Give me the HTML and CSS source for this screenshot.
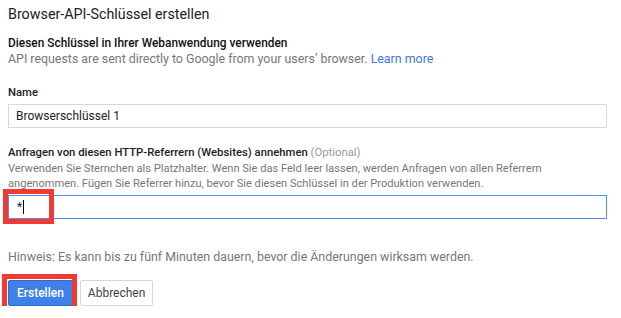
FILE: index.html
```html
<!DOCTYPE html>
<html lang="de">
<head>
<meta charset="utf-8">
<title>Browser-API-Schlüssel erstellen</title>
<link rel="stylesheet" href="styles.css">
</head>
<body>

<h1 class="page_title">Browser-API-Schlüssel erstellen</h1>

<div class="intro">
	<div class="intro_head">Diesen Schlüssel in Ihrer Webanwendung verwenden</div>
	<div class="intro_text">API requests are sent directly to Google from your users’ browser. <a class="link" href="#">Learn more</a></div>
</div>

<div class="field">
	<label class="field_label">Name</label>
	<div class="text_box">Browserschlüssel 1</div>
</div>

<div class="field referrer_field">
	<label class="field_label">Anfragen von diesen HTTP-Referrern (Websites) annehmen <span class="optional">(Optional)</span></label>
	<div class="field_help">Verwenden Sie Sternchen als Platzhalter. Wenn Sie das Feld leer lassen, werden Anfragen von allen Referrern angenommen. Fügen Sie Referrer hinzu, bevor Sie diesen Schlüssel in der Produktion verwenden.</div>
	<div class="box_wrap">
		<div class="text_box focused">*<span class="caret"></span></div>
		<div class="marker marker_input"></div>
	</div>
</div>

<p class="hint">Hinweis: Es kann bis zu fünf Minuten dauern, bevor die Änderungen wirksam werden.</p>

<div class="actions">
	<button class="btn btn_primary">Erstellen</button>
	<button class="btn">Abbrechen</button>
	<div class="marker marker_button"></div>
</div>

</body>
</html>
```

FILE: styles.css
```css
body {
margin: 0;
padding: 5px 14px 0 8px;
font: 12px Roboto, "Liberation Sans", Arial, sans-serif;
color: #222222;
background: #ffffff;
}

.page_title {
font-size: 14.3px;
font-weight: 400;
line-height: 18px;
margin: 0 0 12px 0;
color: #212121;
}

.intro_head {
font-weight: 500;
font-size: 11.9px;
line-height: 16px;
color: #111111;
}

.intro_text {
font-size: 12.4px;
line-height: 16px;
color: #777777;
}

.link {
color: #3b78e7;
text-decoration: none;
}


/* form fields */


.field {
margin-top: 19px;
}

.referrer_field {
margin-top: 18px;
}

.field_label {
display: block;
font-size: 11.3px;
font-weight: 500;
line-height: 14px;
color: #222222;
margin-bottom: 4px;
}

.referrer_field .field_label {
margin-bottom: 1px;
}

.optional {
font-weight: 400;
color: #999999;
}

.field_help {
font-size: 11.1px;
line-height: 15px;
color: #777777;
margin-bottom: 4px;
}

.text_box {
height: 22px;
line-height: 22px;
border: 1px solid #d9d9d9;
padding: 0 7px;
font-size: 12px;
color: #222222;
}

.text_box.focused {
border-color: #4d90fe;
padding-left: 8px;
}

.caret {
display: inline-block;
width: 0;
height: 14px;
border-left: 1px solid #000000;
margin-left: 1px;
vertical-align: -3px;
}

.box_wrap {
position: relative;
}

.hint {
margin: 30px 0 0 0;
font-size: 12.4px;
line-height: 16px;
color: #777777;
}


/* buttons */


.actions {
position: relative;
display: flex;
gap: 7px;
margin-top: 15px;
}

.btn {
height: 26px;
padding: 0 7px;
font: inherit;
font-size: 12px;
color: #444444;
background: #ffffff;
border: 1px solid #d6d6d6;
border-radius: 2px;
}

.btn_primary {
font-weight: 500;
color: #ffffff;
background: #3f7fe8;
border-color: #2f6bd1;
padding: 0 8px;
}


/* red annotation frames drawn over the screenshot */


.marker {
position: absolute;
border: 5px solid #f23a33;
box-sizing: border-box;
}

.marker_input {
left: -5px;
top: -6px;
width: 51px;
height: 35px;
}

.marker_button {
left: -6px;
top: -6px;
width: 75px;
height: 38px;
}
```
